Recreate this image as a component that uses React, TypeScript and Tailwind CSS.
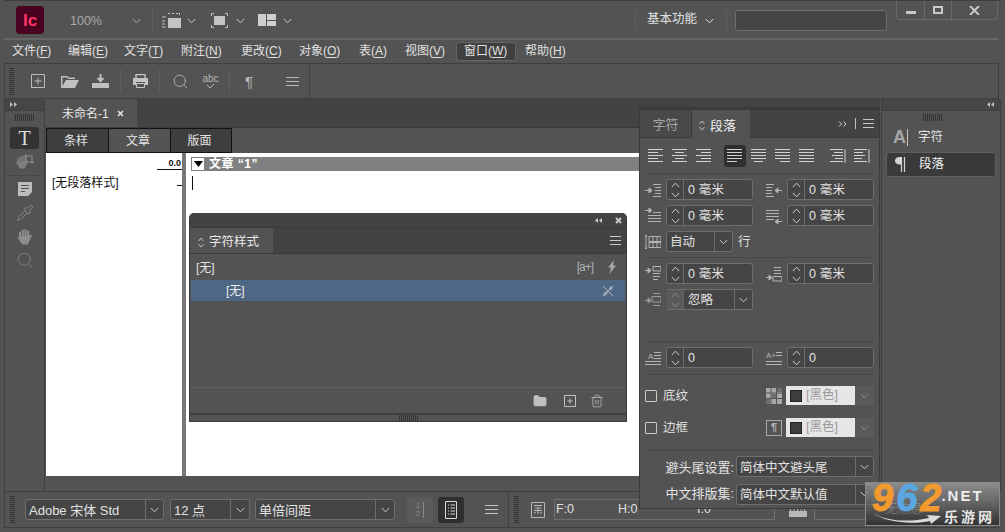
import React from "react";
import { Pipette, Search, Trash2, Folder } from "lucide-react";

const Chev = ({ c = "#c8c8c8", up = false, w = 9 }: { c?: string; up?: boolean; w?: number }) => (
  <svg width={w} height="6" viewBox="0 0 9 6" className="shrink-0">
    <path d={up ? "M.8 5 4.5 1.2 8.2 5" : "M.8 1 4.5 4.8 8.2 1"} fill="none" stroke={c} strokeWidth="1" />
  </svg>
);

const HandIcon = ({ c = "#8d8d8d", s = 17 }: { c?: string; s?: number }) => (
  <svg width={s} height={s} viewBox="0 0 17 17" className="shrink-0">
    <path d="M4 9V4.500M6.800 8V2.500M9.500 8V2M12.200 8.500V3.500" stroke={c} strokeWidth="2.100" strokeLinecap="round" fill="none" />
    <path d="M3 8H13L15.500 6.500 16 7.500 13.500 12.500 12 16.500H6L3 11.500 1 9 2 8.500 3 9.500z" fill={c} />
  </svg>
);

const Grip = ({ cols = 14 }: { cols?: number }) => (
  <div className="flex gap-px h-[7px]">
    {Array.from({ length: cols }).map((_, i) => (
      <div key={i} className="w-px h-full bg-[#333333]" />
    ))}
  </div>
);

const VGrip = () => (
  <div className="flex flex-col gap-px w-[5px]">
    {Array.from({ length: 14 }).map((_, i) => (
      <div key={i} className="h-px w-full bg-[#333333]" />
    ))}
  </div>
);

const Burger = ({ c = "#c8c8c8", w = 13 }: { c?: string; w?: number }) => (
  <svg width={w} height="9" viewBox={`0 0 ${w} 9`} className="shrink-0">
    <path d={`M0 .5H${w}M0 4.5H${w}M0 8.5H${w}`} stroke={c} />
  </svg>
);

const Lines = ({ rows, extra, w = 16, h = 16, c = "#b4b4b4" }: { rows: number[][]; extra?: React.ReactNode; w?: number; h?: number; c?: string }) => (
  <svg width={w} height={h} viewBox={`0 0 ${w} ${h}`} className="shrink-0">
    <path d={rows.map((r) => `M${r[0]} ${r[1]}H${r[2]}`).join("")} stroke={c} fill="none" />
    {extra}
  </svg>
);

const align = (pat: number[][], bar?: boolean) => (
  <Lines w={16} h={14} c="#d2d2d2" rows={pat.map((p, i) => [p[0], i * 3 + 0.5, p[1]])} extra={bar ? <path d="M15 0V14" stroke="#d2d2d2" /> : undefined} />
);

const AlignBtn = ({ active, ml, children }: { active?: boolean; ml: string; children: React.ReactNode }) => (
  <div className={`${ml} w-[22px] h-[22px] flex items-center justify-center rounded-[3px] ${active ? "bg-[#2f2f2f]" : ""}`}>{children}</div>
);

const Stepper = ({ dim }: { dim?: boolean }) => (
  <div className={`w-[17px] shrink-0 h-full flex flex-col items-center justify-center gap-[4px] border-r ${dim ? "border-[#666666] bg-[#5a5a5a]" : "border-[#6e6e6e]"}`}>
    <Chev up w={9} c={dim ? "#8c8c8c" : "#cfcfcf"} />
    <Chev w={9} c={dim ? "#8c8c8c" : "#cfcfcf"} />
  </div>
);

const NumField = ({ v }: { v: string }) => (
  <div className="w-[87px] h-[21px] shrink-0 flex items-center rounded-[3px] border border-[#6e6e6e] bg-[#454545] text-[#e2e2e2] text-[12.5px] tracking-[0.2px]">
    <Stepper />
    <span className="pl-[4px] pt-[2px] leading-none">{v}</span>
  </div>
);

const Select = ({ w, split, v, cls = "", size = "text-[12.5px]" }: { w: string; split: string; v: string; cls?: string; size?: string }) => (
  <div className={`${w} ${cls} h-[21px] shrink-0 flex items-center rounded-[3px] border border-[#6e6e6e] bg-[#454545] text-[#e2e2e2] ${size}`}>
    <span className="flex-1 pl-[3px] pt-[2px] whitespace-nowrap overflow-hidden leading-none">{v}</span>
    <div className={`${split} h-full shrink-0 flex items-center justify-center border-l border-[#6e6e6e]`}>
      <Chev />
    </div>
  </div>
);

const Sep = ({ cls = "" }: { cls?: string }) => <div className={`h-px mx-[5px] bg-[#484848] shrink-0 ${cls}`} />;

const Menu = ({ w, t, k, active }: { w: string; t: string; k: string; active?: boolean }) => (
  <div className={`${w} pl-[7px] h-[19px] flex items-center text-[12px] whitespace-nowrap text-[#e0e0e0] ${active ? "bg-[#3f3f3f] border border-[#656565] rounded-[3px] pl-[6px]" : ""}`}>
    {t}(<span className="underline underline-offset-2">{k}</span>)
  </div>
);

const ind = {
  left: <Lines rows={[[8, 2.5, 16], [10, 5.5, 16], [10, 8.5, 16], [10, 11.5, 16], [8, 14.5, 16]]} extra={<path d="M0 8.5H5M4 6v5L7 8.5z" stroke="#b4b4b4" fill="#b4b4b4" />} />,
  right: <Lines rows={[[0, 2.5, 8], [0, 5.5, 6], [0, 8.5, 6], [0, 11.5, 6], [0, 14.5, 8]]} extra={<path d="M16 8.5H11M12 6v5L9 8.5z" stroke="#b4b4b4" fill="#b4b4b4" />} />,
  first: <Lines rows={[[8, 4.5, 16], [3, 7.5, 16], [3, 10.5, 16], [3, 13.5, 16]]} extra={<path d="M0 2.5H5M4 0v5L7 2.5z" stroke="#b4b4b4" fill="#b4b4b4" />} />,
  last: <Lines rows={[[0, 2.5, 13], [0, 5.5, 13], [0, 8.5, 13], [0, 11.5, 8]]} extra={<path d="M16 13.500H11M12 11v5L9 13.500z" stroke="#b4b4b4" fill="#b4b4b4" />} />,
  before: <Lines rows={[[8, 7.5, 15], [8, 10.5, 15], [8, 13.5, 13]]} extra={<><path d="M8 .5H16V5H8z" stroke="#b4b4b4" fill="none" /><path d="M0 4.5H4M3 2v5L6 4.5z" stroke="#b4b4b4" fill="#b4b4b4" /></>} />,
  after: <Lines rows={[[8, 1.5, 15], [8, 4.5, 15], [8, 7.5, 15]]} extra={<><path d="M7 10.5H16V15H7z" stroke="#b4b4b4" fill="none" /><path d="M0 11.5H4M3 9v5L6 11.5z" stroke="#b4b4b4" fill="#b4b4b4" /></>} />,
  ignore: <Lines c="#9a9a9a" rows={[[8, 1.5, 15], [8, 13.5, 15]]} extra={<><path d="M7 4.5H16V10H7z" stroke="#9a9a9a" fill="none" /><path d="M0 8.5H4M3 6v5L6 8.5z" stroke="#9a9a9a" fill="#9a9a9a" /></>} />,
};

const Swatch = () => <div className="w-[12px] h-[12px] bg-[#3d3d3d] border border-[#222222] shrink-0" />;

const ColorPick = ({ icon }: { icon: React.ReactNode }) => (
  <div className="flex items-center h-[19px] ml-auto mr-[5px]">
    {icon}
    <div className="ml-[3px] w-[69px] h-[19px] bg-[#e6e6e6] flex items-center pl-[4px] gap-[4px] text-[#9b9b9b] text-[12.5px]">
      <Swatch />
      <span className="leading-none">[黑色]</span>
    </div>
    <div className="w-[19px] h-[19px] bg-[#5a5a5a] flex items-center justify-center">
      <Chev c="#8f8f8f" />
    </div>
  </div>
);

export default function App() {
  return (
    <div className="relative w-[1005px] h-[532px] overflow-hidden bg-[#535353] px-[4px] flex flex-col text-[#dedede] [font-family:'Liberation_Sans','Noto_Sans_CJK_SC',sans-serif]">
      {/* title bar */}
      <div className="h-[38px] shrink-0 flex items-start relative border-t border-[#3f3f3f]">
        <div className="ml-[12px] mt-[5px] w-[28px] h-[28px] rounded-[4px] bg-[#49021f] flex items-center justify-center text-[#ff3366] font-bold text-[17px] leading-none">Ic</div>
        <span className="ml-[26px] mt-[14px] text-[12.5px] leading-none text-[#aaaaaa] w-[50px]">100%</span>
        <div className="ml-[12px] mt-[17px]"><Chev c="#a8a8a8" /></div>
        <div className="ml-[11px] mt-[7px] w-px h-[25px] bg-[#5f5f5f]" />
        <svg className="ml-[9px] mt-[12px]" width="19" height="15" viewBox="0 0 19 15">
          <path d="M6 5h13v10H6z" fill="#c4c4c4" />
          <path d="M0 4h4M0 8h3M0 11h3M0 14h4M6 .5H8M10 .5H12M14 .5H16M17.5 0v2" stroke="#c4c4c4" fill="none" />
        </svg>
        <div className="ml-[6px] mt-[17px]"><Chev /></div>
        <svg className="ml-[15px] mt-[12px]" width="17" height="15" viewBox="0 0 17 15">
          <path d="M3 3h11v9H3z" fill="#c4c4c4" />
          <path d="M.5 3V.5H3M14 .5h2.5V3M.5 12v2.5H3M14 14.5h2.5V12" stroke="#c4c4c4" fill="none" />
        </svg>
        <div className="ml-[8px] mt-[17px]"><Chev /></div>
        <div className="ml-[13px] mt-[13px] w-[18px] h-[12px] flex gap-px">
          <div className="w-[8px] h-full bg-[#cfcfcf]" />
          <div className="flex-1 flex flex-col gap-px">
            <div className="flex-1 bg-[#cfcfcf]" />
            <div className="flex-1 bg-[#cfcfcf]" />
          </div>
        </div>
        <div className="ml-[7px] mt-[17px]"><Chev /></div>
        <div className="ml-[343px] mt-[9px] w-px h-[21px] bg-[#606060]" />
        <span className="ml-[11px] mt-[12px] text-[12.5px] leading-none whitespace-nowrap text-[#e0e0e0]">基本功能</span>
        <div className="ml-[8px] mt-[17px]"><Chev c="#e0e0e0" /></div>
        <div className="ml-[12px] mt-[9px] w-px h-[21px] bg-[#606060]" />
        <div className="ml-[8px] mt-[9px] w-[152px] h-[21px] shrink-0 rounded-[3px] border border-[#6e6e6e] bg-[#454545]" />
        <div className="ml-[9px] w-[102px] h-[19px] shrink-0 flex border border-t-0 border-[#6a6a6a] rounded-b-[4px]">
          <div className="w-[28px] border-r border-[#6a6a6a] flex items-center justify-center"><div className="w-[10px] h-[3px] bg-[#c8c8c8] mt-[4px]" /></div>
          <div className="w-[27px] border-r border-[#6a6a6a] flex items-center justify-center"><div className="w-[10px] h-[8px] border-2 border-[#c8c8c8]" /></div>
          <div className="flex-1 flex items-center justify-center">
            <svg width="11" height="9" viewBox="0 0 11 9"><path d="M1 0l9 9M10 0L1 9" stroke="#c8c8c8" strokeWidth="2" /></svg>
          </div>
        </div>
      </div>
      <div className="h-[2px] shrink-0 bg-[#666666] mr-[3px]" />

      {/* menu */}
      <div className="h-[23px] shrink-0 flex items-center pl-px pb-px">
        <Menu w="w-[56px]" t="文件" k="F" />
        <Menu w="w-[56px]" t="编辑" k="E" />
        <Menu w="w-[57px]" t="文字" k="T" />
        <Menu w="w-[60px]" t="附注" k="N" />
        <Menu w="w-[58px]" t="更改" k="C" />
        <Menu w="w-[60px]" t="对象" k="O" />
        <Menu w="w-[46px]" t="表" k="A" />
        <Menu w="w-[58px]" t="视图" k="V" />
        <Menu w="w-[60px] mr-[2px]" t="窗口" k="W" active />
        <Menu w="w-[60px]" t="帮助" k="H" />
      </div>

      {/* control strip */}
      <div className="h-[36px] shrink-0 flex items-center border-y border-l border-[#3f3f3f] mr-[2px] border-r">
        <div className="w-[305px] h-full flex items-center border-r border-[#3f3f3f] text-[#c0c0c0]">
          <div className="ml-[4px]"><VGrip /></div>
          <svg className="ml-[17px]" width="14" height="14" viewBox="0 0 14 14"><path d="M.5.5h13v13H.5zM7 3.5v7M3.5 7h7" fill="none" stroke="#bdbdbd" /></svg>
          <svg className="ml-[16px]" width="18" height="13" viewBox="0 0 18 13"><path d="M0 1V13H14L18 5H5L1.5 11V2.5H6L7 4H14V2.5H7.5L6.5 1z" fill="#c0c0c0" /></svg>
          <svg className="ml-[13px]" width="17" height="14" viewBox="0 0 17 14"><path d="M8.5 0v6M5.5 4 8.5 7l3-3" stroke="#c0c0c0" strokeWidth="2" fill="none" /><path d="M0 9h17v5H0z" fill="#c0c0c0" /></svg>
          <div className="ml-[11px] w-px h-[24px] bg-[#5f5f5f]" />
          <svg className="ml-[12px]" width="15" height="14" viewBox="0 0 15 14"><path d="M3 4V.5h9V4" stroke="#c4c4c4" fill="none" strokeWidth="1.4" /><path d="M0 4h15v7H12V8H3v3H0z" fill="#c4c4c4" /><path d="M3.5 9.5h8v4h-8z" fill="none" stroke="#c4c4c4" /></svg>
          <div className="ml-[11px] w-px h-[24px] bg-[#5f5f5f]" />
          <Search className="ml-[12px]" size={17} strokeWidth={1.2} color="#b8b8b8" />
          <div className="ml-[13px] flex flex-col items-center w-[17px]">
            <span className="text-[10px] leading-[9px] text-[#b8b8b8]">abc</span>
            <svg width="9" height="6" viewBox="0 0 9 6"><path d="M1 2l3 3 4-4" stroke="#b8b8b8" fill="none" /></svg>
          </div>
          <div className="ml-[10px] w-px h-[24px] bg-[#5f5f5f]" />
          <span className="ml-[15px] text-[15px] leading-none text-[#b8b8b8]">¶</span>
          <div className="ml-[33px]"><Burger c="#b8b8b8" /></div>
        </div>
      </div>

      {/* main */}
      <div className="flex-1 min-h-0 flex">
        {/* tools */}
        <div className="w-[41px] shrink-0 flex flex-col items-stretch border-l border-r border-[#3f3f3f] mr-[1px]">
          <div className="h-[12px] bg-[#464646] border-b border-[#3f3f3f] flex items-center pl-[5px]">
            <svg width="8" height="5" viewBox="0 0 8 5"><path d="M0 0l3 2.5L0 5zM4 0l3 2.5L4 5z" fill="#c0c0c0" /></svg>
          </div>
          <div className="flex justify-center mt-[3px]"><Grip cols={10} /></div>
          <div className="mx-[5px] mt-[6px] h-[22px] rounded-[3px] bg-[#333333] flex items-center justify-center [font-family:'Liberation_Serif',serif] text-[20px] leading-none text-[#dedede]">T</div>
          <div className="flex justify-center mt-[3px] h-[20px] items-center">
            <HandIcon s={14} c="#7f7f7f" />
            <svg className="-ml-[5px] -mt-[6px]" width="10" height="10" viewBox="0 0 10 10"><path d="M2 0v8h8M0 2h8v8" stroke="#8d8d8d" fill="none" /></svg>
          </div>
          <div className="h-px mx-[1px] bg-[#484848] mt-[3px]" />
          <div className="flex justify-center mt-[6px]">
            <svg width="14" height="14" viewBox="0 0 14 14"><path d="M0 0h14v10l-4 4H0z" fill="#bdbdbd" /><path d="M3 3.5h8M3 6.5h8M3 9.5h4" stroke="#535353" /></svg>
          </div>
          <div className="flex justify-center mt-[8px]"><Pipette size={18} strokeWidth={1.3} color="#8a8a8a" /></div>
          <div className="flex justify-center mt-[6px]"><HandIcon /></div>
          <div className="flex justify-center mt-[6px]"><Search size={18} strokeWidth={1.2} color="#7f7f7f" /></div>
        </div>

        {/* document */}
        <div className="w-[834px] shrink-0 flex flex-col">
          <div className="h-[29px] shrink-0 bg-[#434343] border-b border-[#3a3a3a] flex">
            <div className="w-[91px] h-full bg-[#535353] flex items-center pl-[16px] pt-px text-[12px] text-[#e6e6e6] whitespace-nowrap">
              未命名-1
              <svg className="ml-[8px]" width="7" height="7" viewBox="0 0 7 7"><path d="M1 1l5 5M6 1L1 6" stroke="#e6e6e6" strokeWidth="1.6" /></svg>
            </div>
          </div>
          <div className="h-[25px] shrink-0 flex text-[12px] text-[#e4e4e4]">
            <div className="w-[63px] pr-[3px] bg-[#3e3e3e] border border-[#111111] flex items-center justify-center">条样</div>
            <div className="w-[62px] pr-[3px] border-y border-r border-[#111111] flex items-center justify-center">文章</div>
            <div className="w-[61px] pr-[3px] bg-[#3e3e3e] border-y border-r border-[#111111] flex items-center justify-center">版面</div>
          </div>
          <div className="h-[323px] shrink-0 flex bg-white text-[#111111]">
            <div className="w-[136px] shrink-0 flex flex-col">
              <div className="mt-[5px] h-[12px] ml-[111px] border-b border-[#111111] text-right text-[9px] font-bold leading-[11px] pr-px">0.0</div>
              <div className="flex mt-[5px] items-center">
                <span className="ml-[6px] text-[12px] leading-[16px] whitespace-nowrap">[无段落样式]</span>
                <div className="ml-auto mt-[5px] w-[5px] h-px bg-[#111111]" />
              </div>
            </div>
            <div className="w-[4px] shrink-0 bg-[#777777]" />
            <div className="flex-1 flex flex-col pt-[4px] pl-[5px]">
              <div className="h-[14px] bg-[#808080] flex items-center text-white text-[12px] font-bold">
                <div className="ml-px w-[12px] h-[12px] bg-white flex items-center justify-center mr-[5px]">
                  <svg width="9" height="6" viewBox="0 0 9 6"><path d="M0 0h9L4.500 6z" fill="#000000" /></svg>
                </div>
                <span className="tracking-[0.5px] whitespace-pre">文章 “1”</span>
              </div>
              <div className="mt-[5px] ml-[1px] w-px h-[14px] bg-[#111111]" />
            </div>
          </div>
          <div className="flex-1" />
        </div>

        {/* right dock */}
        <div className="w-[120px] shrink-0 flex flex-col border-x border-[#3f3f3f] ml-px">
          <div className="h-[12px] bg-[#464646] border-b border-[#3f3f3f] flex items-center justify-end pr-[5px]">
            <svg width="8" height="5" viewBox="0 0 8 5"><path d="M3 0L0 2.500 3 5zM7 0L4 2.500 7 5z" fill="#c0c0c0" /></svg>
          </div>
          <div className="flex justify-center mt-[3px] pr-[18px]"><Grip cols={10} /></div>
          <div className="flex items-center h-[24px] mt-[4px] pl-[11px] text-[12.5px] text-[#e2e2e2]">
            <span className="text-[18px] font-bold leading-none text-[#a8a8a8] w-[13px]">A</span>
            <div className="w-px h-[17px] bg-[#c4c4c4] ml-px" />
            <span className="ml-[10px]">字符</span>
          </div>
          <div className="flex items-center h-[25px] mt-[3px] mx-[4px] pl-[8px] bg-[#3a3a3a] border border-[#5f5f5f] rounded-[3px] text-[12.5px] text-[#f0f0f0]">
            <svg width="11" height="15" viewBox="0 0 11 15" className="shrink-0"><path d="M6 0H4.500C1.500 0 0 1.800 0 3.800S1.500 7.500 4.500 7.500H6z" fill="#d4d4d4" /><path d="M6.500 0v15M9.500 0v15" stroke="#d4d4d4" strokeWidth="1.200" /></svg>
            <span className="ml-[13px]">段落</span>
          </div>
        </div>
      </div>

      {/* bottom bar */}
      <div className="h-[37px] shrink-0 flex items-center border-t border-b border-x border-[#3f3f3f] mb-[4px] mr-[2px]">
        <div className="ml-[5px] mr-[10px]"><VGrip /></div>
        <Select w="w-[139px]" split="w-[18px]" v="Adobe 宋体 Std" size="text-[13px]" />
        <Select w="w-[80px]" cls="ml-[6px]" split="w-[19px]" v="12 点" size="text-[13px]" />
        <Select w="w-[140px]" cls="ml-[5px]" split="w-[19px]" v="单倍间距" size="text-[13px]" />
        <div className="ml-[12px] w-[26px] h-[26px] rounded-[3px] bg-[#5a5a5a] flex items-center justify-center gap-[3px] text-[8px] leading-[8px] text-[#8a8a8a]">
          <div className="flex flex-col items-center"><span>1</span><span>2</span></div>
          <div className="w-px h-[16px] bg-[#8a8a8a]" />
        </div>
        <div className="ml-[5px] w-[26px] h-[26px] rounded-[3px] bg-[#2f2f2f] flex items-center justify-center">
          <svg width="12" height="18" viewBox="0 0 12 18"><path d="M.5.5h11v17H.5z" stroke="#d8d8d8" fill="none" /><path d="M3 4h1M5.500 4H10M3 7h1M5.500 7H10M3 10h1M5.500 10H10M3 13h1M5.500 13H10" stroke="#d8d8d8" /></svg>
        </div>
        <div className="ml-[21px]"><Burger c="#c4c4c4" /></div>
        <div className="ml-[10px] w-px h-full bg-[#3f3f3f]" />
        <div className="ml-[5px]"><VGrip /></div>
        <svg className="ml-[12px]" width="14" height="16" viewBox="0 0 14 16"><path d="M.5.5h13v15H.5z" stroke="#b8b8b8" fill="none" /><path d="M3 3.500h8M4 6h6M3 8.500h8M7 6v6M3 11l2-1M11 11l-2-1" stroke="#b8b8b8" /></svg>
        <div className="ml-[9px] w-[221px] h-[21px] shrink-0 border border-[#6e6e6e] flex items-center text-[12.5px] text-[#e0e0e0]">
          <span className="ml-px w-[62px]">F:0</span>
          <span className="w-[79px]">H:0</span>
          <span>I:0</span>
        </div>
        <svg className="ml-[14px] mt-[6px] shrink-0" width="18" height="9" viewBox="0 0 18 9"><path d="M0 3h18v6H0z" fill="#b8b8b8" /><path d="M1.500 0v3M5 1v2M8.500 0v3M12 1v2M15.500 0v3" stroke="#b8b8b8" /></svg>
        <div className="ml-[7px] w-[180px] h-[21px] shrink-0 border border-[#6e6e6e] text-[12.500px] text-[#bdbdbd] flex items-center justify-center whitespace-nowrap">无信息</div>
      </div>

      {/* floating: character styles */}
      <div className="absolute left-[189px] top-[213px] w-[438px] h-[209px] flex flex-col bg-[#535353] border-x border-b border-[#3a3a3a] rounded-t-[5px] overflow-hidden">
        <div className="h-[14px] shrink-0 bg-[#434343] flex items-center justify-end pr-[4px] gap-[12px]">
          <svg width="8" height="5" viewBox="0 0 8 5"><path d="M3 0L0 2.500 3 5zM7 0L4 2.500 7 5z" fill="#c8c8c8" /></svg>
          <svg width="7" height="7" viewBox="0 0 7 7"><path d="M1 1l5 5M6 1L1 6" stroke="#c8c8c8" strokeWidth="2" /></svg>
        </div>
        <div className="h-[27px] shrink-0 bg-[#434343] border-y border-[#3a3a3a] flex items-stretch">
          <div className="w-[83px] bg-[#535353] flex items-center pl-[8px] pt-[3px] text-[12.5px] text-[#e8e8e8]">
            <svg width="6" height="11" viewBox="0 0 6 11" className="mr-[5px]"><path d="M.5 4 3 1l2.500 3M.5 7 3 10l2.500-3" stroke="#bcbcbc" fill="none" /></svg>
            字符样式
          </div>
          <div className="ml-auto mr-[5px] self-center"><Burger w={11} /></div>
        </div>
        <div className="h-[26px] shrink-0 flex items-center pl-[6px] text-[12px] text-[#e4e4e4]">
          <span className="pt-[2px]">[无]</span>
          <span className="ml-auto text-[12px] text-[#b0b0b0] tracking-[-1px]">[a+]</span>
          <svg className="ml-[14px] mr-[9px]" width="10" height="14" viewBox="0 0 10 14"><path d="M7 0 1 7.500h3L2.500 14 9 5.500H6z" fill="#a8a8a8" /></svg>
        </div>
        <div className="h-[21px] shrink-0 bg-[#4e6784] flex items-center mx-px pl-[35px] text-[12px] text-[#eeeeee]">
          <span>[无]</span>
          <svg className="ml-auto mr-[11px]" width="12" height="12" viewBox="0 0 12 12"><path d="M1 11 11 1M1 1l10 10" stroke="#a8b4c4" /><path d="M6.500 3.500 9 1l2 2-2.500 2.500z M4 6 1 9l2 2 3-3z" fill="#a0a8b4" /></svg>
        </div>
        <div className="flex-1 border-b border-[#5f5f5f] mx-px" />
        <div className="h-[25px] shrink-0 flex items-center justify-end pr-[22px]">
          <Folder size={14} color="#c0c0c0" fill="#c0c0c0" />
          <svg className="ml-[17px]" width="12" height="12" viewBox="0 0 12 12"><path d="M.5.5h11v11H.5zM6 3.500v5M3.500 6h5" stroke="#c0c0c0" fill="none" /></svg>
          <Trash2 className="ml-[14px]" size={14} color="#c0c0c0" strokeWidth={1.3} />
        </div>
        <div className="h-[2px] shrink-0 bg-[#3f3f3f]" />
        <div className="h-[6px] shrink-0 flex justify-center items-center overflow-hidden"><Grip cols={10} /></div>
      </div>

      {/* floating: paragraph */}
      <div className="absolute left-[639px] top-[107px] w-[241px] h-[402px] flex flex-col bg-[#535353] border-x border-b border-[#3a3a3a]">
        <div className="h-[3px] shrink-0 bg-[#3a3a3a]" />
        <div className="h-[28px] shrink-0 flex bg-[#434343] border-b border-[#3a3a3a] text-[13px]">
          <div className="w-[52px] pt-[3px] bg-[#494949] border-r border-[#3a3a3a] flex items-center justify-center text-[#a6a6a6]">字符</div>
          <div className="w-[58px] h-[28px] pt-[3px] bg-[#535353] flex items-center pl-[7px] text-[#f0f0f0]">
            <svg width="6" height="11" viewBox="0 0 6 11" className="mr-[5px]"><path d="M.5 4 3 1l2.500 3M.5 7 3 10l2.500-3" stroke="#bcbcbc" fill="none" /></svg>
            段落
          </div>
          <div className="ml-auto flex items-center pr-[5px]">
            <svg width="9" height="6" viewBox="0 0 9 6"><path d="M1 .5 3.500 3 1 5.500M5.500 .5 8 3 5.500 5.500" stroke="#d0d0d0" fill="none" /></svg>
            <div className="w-px h-[11px] bg-[#c0c0c0] ml-[8px] mr-[7px]" />
            <Burger w={11} />
          </div>
        </div>
        <div className="h-[35px] shrink-0 flex items-center pl-[5px]">
          <AlignBtn ml="">{align([[0, 15], [0, 10], [0, 15], [0, 10], [0, 15]])}</AlignBtn>
          <AlignBtn ml="ml-[2px]">{align([[0, 15], [3, 12], [0, 15], [3, 12], [0, 15]])}</AlignBtn>
          <AlignBtn ml="ml-[2px]">{align([[0, 15], [5, 15], [0, 15], [5, 15], [0, 15]])}</AlignBtn>
          <AlignBtn ml="ml-[9px]" active>{align([[0, 15], [0, 15], [0, 15], [0, 15], [0, 10]])}</AlignBtn>
          <AlignBtn ml="ml-[2px]">{align([[0, 15], [0, 15], [0, 15], [0, 15], [3, 12]])}</AlignBtn>
          <AlignBtn ml="ml-[2px]">{align([[0, 15], [0, 15], [0, 15], [0, 15], [5, 15]])}</AlignBtn>
          <AlignBtn ml="ml-[2px]">{align([[0, 15], [0, 15], [0, 15], [0, 15], [0, 15]])}</AlignBtn>
          <AlignBtn ml="ml-[9px]">{align([[0, 13], [4, 13], [2, 13], [5, 13], [0, 13]], true)}</AlignBtn>
          <AlignBtn ml="ml-[2px]">{align([[0, 13], [0, 9], [0, 11], [0, 8], [0, 13]], true)}</AlignBtn>
        </div>
        <Sep />
        <div className="flex items-center pl-[5px] mt-[5px]">
          {ind.left}<div className="ml-[5px]"><NumField v="0 毫米" /></div>
          <div className="ml-[13px]">{ind.right}</div><div className="ml-[5px]"><NumField v="0 毫米" /></div>
        </div>
        <div className="flex items-center pl-[5px] mt-[5px]">
          {ind.first}<div className="ml-[5px]"><NumField v="0 毫米" /></div>
          <div className="ml-[13px]">{ind.last}</div><div className="ml-[5px]"><NumField v="0 毫米" /></div>
        </div>
        <div className="flex items-center pl-[5px] mt-[5px]">
          <svg width="16" height="16" viewBox="0 0 16 16" className="shrink-0"><path d="M1 1v14M0 2.500 1 1l1 1.500M0 13.500 1 15l1-1.500M4 2.500h12v5H4zM4 8.500h12v5H4zM8 2.500v11M12 2.500v11" stroke="#b4b4b4" fill="none" /></svg>
          <Select w="w-[67px]" cls="ml-[5px]" split="w-[18px]" v="自动" />
          <span className="ml-[5px] pt-[2px] text-[12.500px]">行</span>
        </div>
        <Sep cls="mt-[5px]" />
        <div className="flex items-center pl-[5px] mt-[5px]">
          {ind.before}<div className="ml-[5px]"><NumField v="0 毫米" /></div>
          <div className="ml-[13px]">{ind.after}</div><div className="ml-[5px]"><NumField v="0 毫米" /></div>
        </div>
        <div className="flex items-center pl-[5px] mt-[5px]">
          {ind.ignore}
          <div className="ml-[5px] w-[87px] h-[21px] flex items-center rounded-[3px] border border-[#6e6e6e] border-l-[#5a5a5a] bg-[#454545] text-[12.500px] text-[#e2e2e2]">
            <Stepper dim />
            <span className="flex-1 pl-[4px] pt-[2px] leading-none">忽略</span>
            <div className="w-[18px] h-full flex items-center justify-center border-l border-[#6e6e6e]"><Chev /></div>
          </div>
        </div>
        <Sep cls="mt-[31px]" />
        <div className="flex items-center pl-[5px] mt-[5px]">
          <Lines rows={[[9, 2.5, 16], [9, 5.5, 16], [9, 8.5, 16], [0, 11.5, 16], [0, 14.5, 16]]} extra={<text x="3" y="9" fontSize="8" fill="#b4b4b4">A</text>} />
          <div className="ml-[5px]"><NumField v="0" /></div>
          <div className="ml-[13px]">
            <Lines rows={[[10, 2.5, 16], [10, 5.5, 16], [0, 11.5, 16], [0, 14.5, 16]]} extra={<text x="0" y="8" fontSize="8" fill="#b4b4b4">A+</text>} />
          </div>
          <div className="ml-[5px]"><NumField v="0" /></div>
        </div>
        <Sep cls="mt-[6px]" />
        <div className="flex items-center pl-[5px] mt-[11px] h-[19px] text-[12.500px]">
          <div className="w-[12px] h-[12px] border border-[#c8c8c8] rounded-[1px]" />
          <span className="ml-[6px] pt-[2px]">底纹</span>
          <ColorPick icon={
            <svg width="16" height="16" viewBox="0 0 16 16" className="mr-px"><path d="M0 0h16v16H0z" fill="#a8a8a8" /><path d="M5 0v16M10.500 0v16M0 5h16M0 10.500h16" stroke="#535353" /><path d="M6 6h4v4H6zM11 0h5v4H11zM0 11h4v5H0z" fill="#6e6e6e" /></svg>
          } />
        </div>
        <div className="flex items-center pl-[5px] mt-[13px] h-[19px] text-[12.500px]">
          <div className="w-[12px] h-[12px] border border-[#c8c8c8] rounded-[1px]" />
          <span className="ml-[6px] pt-[2px]">边框</span>
          <ColorPick icon={
            <div className="w-[16px] h-[16px] mr-px border border-[#a8a8a8] flex items-center justify-center text-[11px] font-bold leading-none text-[#b8b8b8]">¶</div>
          } />
        </div>
        <Sep cls="mt-[13px]" />
        <div className="flex items-center mt-[5px] text-[13px]">
          <span className="w-[96px] pr-[2px] pt-[2px] text-right whitespace-nowrap text-[#e2e2e2]">避头尾设置:</span>
          <Select w="w-[138px]" split="w-[18px]" v="简体中文避头尾" />
        </div>
        <div className="flex items-center mt-[6px] text-[13px]">
          <span className="w-[96px] pr-[2px] text-right whitespace-nowrap text-[#e2e2e2]">中文排版集:</span>
          <Select w="w-[138px]" split="w-[18px]" v="简体中文默认值" />
        </div>
      </div>

      {/* watermark */}
      <div className="absolute left-[865px] top-[482px] w-[135px] h-[44px] border border-[#8a8a8a] bg-gradient-to-b from-[#9a9a9a]/80 via-[#6a6a6a]/65 to-[#2a2a2a]/80">
        <div className="flex items-start pl-[6px] h-[27px]">
          <span className="italic font-bold text-[38px] leading-[30px] tracking-[3px] whitespace-nowrap [-webkit-text-stroke:1px_currentColor]">
            <span className="text-[#f29a2e]">9</span><span className="text-[#5aa6e0]">6</span><span className="text-[#f29a2e]">2</span>
          </span>
          <span className="-ml-[3px] mt-[5px] font-bold text-[15px] leading-[16px] tracking-[2px] whitespace-nowrap text-[#ececec]">.NET</span>
        </div>
        <div className="flex items-center pl-[7px]">
          <svg className="shrink-0" width="68" height="14" viewBox="0 0 68 14"><path d="M0 3C14 12 38 12 56 8L54 5 68 6 58 14 57 11C38 15 12 12 0 3z" fill="#dcdcdc" /></svg>
          <span className="ml-[3px] font-bold text-[14px] leading-[14px] tracking-[3px] whitespace-nowrap text-[#e6e6e6]">乐游网</span>
        </div>
      </div>
    </div>
  );
}
